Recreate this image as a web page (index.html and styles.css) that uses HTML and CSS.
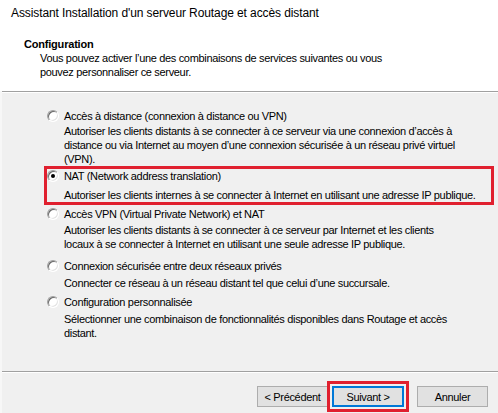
FILE: index.html
```html
<!DOCTYPE html>
<html lang="fr">
<head>
<meta charset="utf-8">
<title>Assistant Installation</title>
<link rel="stylesheet" href="styles.css">
</head>
<body>
<div class="window">
  <header class="header">
    <div class="title">Assistant Installation d'un serveur Routage et accès distant</div>
    <div class="section">
      <div class="section-name">Configuration</div>
      <div class="section-desc">Vous pouvez activer l’une des combinaisons de services suivantes ou vous<br>pouvez personnaliser ce serveur.</div>
    </div>
  </header>
  <div class="sep"></div>
  <main class="content">
    <div class="option o1">
      <div class="label"><span class="radio"></span><span>Accès à distance (connexion à distance ou VPN)</span></div>
      <div class="desc">Autoriser les clients distants à se connecter à ce serveur via une connexion d’accès à<br>distance ou via Internet au moyen d’une connexion sécurisée à un réseau privé virtuel<br>(VPN).</div>
    </div>
    <div class="option o2 selected">
      <div class="label"><span class="radio checked"></span><span>NAT (Network address translation)</span></div>
      <div class="desc">Autoriser les clients internes à se connecter à Internet en utilisant une adresse IP publique.</div>
    </div>
    <div class="option o3">
      <div class="label"><span class="radio"></span><span>Accès VPN (Virtual Private Network) et NAT</span></div>
      <div class="desc">Autoriser les clients distants à se connecter à ce serveur par Internet et les clients<br>locaux à se connecter à Internet en utilisant une seule adresse IP publique.</div>
    </div>
    <div class="option o4">
      <div class="label"><span class="radio"></span><span>Connexion sécurisée entre deux réseaux privés</span></div>
      <div class="desc">Connecter ce réseau à un réseau distant tel que celui d’une succursale.</div>
    </div>
    <div class="option o5">
      <div class="label"><span class="radio"></span><span>Configuration personnalisée</span></div>
      <div class="desc">Sélectionner une combinaison de fonctionnalités disponibles dans Routage et accès<br>distant.</div>
    </div>
  </main>
  <div class="sep"></div>
  <footer class="footer">
    <button class="btn">&lt; Précédent</button>
    <span class="focus-mark"><button class="btn default">Suivant &gt;</button></span>
    <button class="btn cancel">Annuler</button>
  </footer>
</div>
</body>
</html>
```
FILE: styles.css
```css
* { box-sizing: border-box; }
html, body { margin: 0; padding: 0; }
body {
  width: 498px;
  height: 413px;
  overflow: hidden;
  background: #f0f0f0;
  font-family: "Liberation Sans", Arial, sans-serif;
  font-size: 11px;
  letter-spacing: -0.33px;
  color: #000;
}
.window {
  height: 413px;
  display: flex;
  flex-direction: column;
  border-left: 2px solid #f7f7f7;
}
.header {
  background: #fff;
  height: 91px;
  padding-top: 6px;
  margin-left: -2px;
}
.title {
  padding-left: 11px;
  font-size: 12px;
  letter-spacing: -0.1px;
  line-height: 14px;
}
.section { padding-top: 17px; }
.section-name {
  padding-left: 24px;
  font-weight: bold;
  letter-spacing: -0.2px;
  line-height: 14px;
}
.section-desc {
  padding-left: 40px;
  line-height: 14px;
}
.sep {
  height: 2px;
  border-top: 1px solid #a0a0a0;
  border-bottom: 1px solid #fff;
}
.content {
  height: 278px;
  padding: 16px 0 0 45px;
}
.option { width: 444px; }
.label {
  display: flex;
  align-items: center;
  height: 14px;
  line-height: 14px;
  white-space: nowrap;
}
.radio {
  width: 12px;
  height: 12px;
  margin: 0 5px 0 0;
  border-radius: 50%;
  background: #fff;
  border: 1px solid;
  border-color: #a0a0a0 #ffffff #ffffff #a0a0a0;
  box-shadow: inset 1px 1px 0 #696969, inset -1px -1px 0 #e3e3e3;
  display: flex;
  align-items: center;
  justify-content: center;
  flex: none;
}
.radio.checked::after {
  content: "";
  width: 4px;
  height: 4px;
  border-radius: 50%;
  background: #000;
}
.desc {
  padding-left: 17px;
  line-height: 14px;
  white-space: nowrap;
  margin-top: 1px;
}
.o2 { margin-top: 3px; }
.o2 .desc { margin-top: 5px; }
.o3 { margin-top: 5px; }
.o3 .desc { margin-top: 2px; }
.o4 { margin-top: 8px; }
.o4 .desc { margin-top: 3px; }
.o5 { margin-top: 5px; }
.o5 .desc { margin-top: 3px; }
.selected {
  outline: 3px solid #e0202f;
}
.footer {
  flex: 1;
  display: flex;
  justify-content: flex-end;
  align-items: flex-start;
  padding: 13px 10px 0 0;
}
.btn {
  width: 71px;
  height: 21px;
  padding: 0;
  font-family: inherit;
  font-size: 11px;
  letter-spacing: -0.33px;
  color: #000;
  background: #e1e1e1;
  border: 1px solid #adadad;
}
.focus-mark {
  margin: -5px 0 0 0;
  padding: 2px;
  border: 3px solid #e0202f;
  display: flex;
}
.btn.default {
  width: 72px;
  border: 2px solid #0078d7;
}
.cancel { margin-left: 8px; }
.footer > .btn:first-child { margin-right: -1px; }
```
